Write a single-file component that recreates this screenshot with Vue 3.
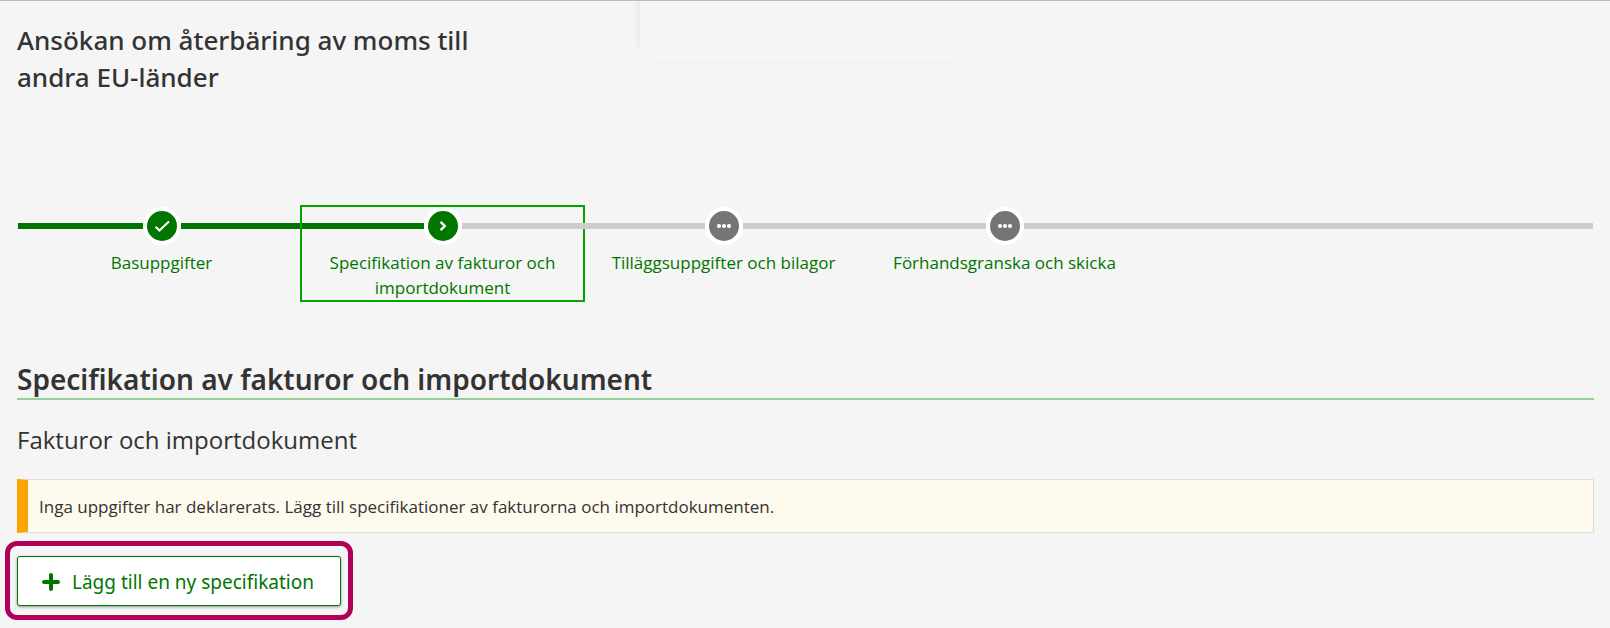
<template>
  <div class="page">
    <header class="page-header">
      <h1>Ansökan om återbäring av moms till andra EU-länder</h1>
      <div class="header-panel"></div>
    </header>

    <nav aria-label="Ansökans steg">
      <ol class="steps">
        <li
          v-for="step in steps"
          :key="step.label"
          class="step"
          :class="step.state"
          :aria-current="step.state === 'current' ? 'step' : null"
        >
          <div class="step-track">
            <span class="line line-before"></span>
            <span class="step-circle">
              <svg viewBox="0 0 30 30" width="30" height="30" aria-hidden="true">
                <path
                  v-if="step.state === 'done'"
                  class="stroke"
                  d="M8.6 15.8l3.8 3.7 9.6-9"
                />
                <path
                  v-else-if="step.state === 'current'"
                  class="stroke chevron"
                  d="M12.6 10.8l4.2 4.2-4.2 4.2"
                />
                <g v-else fill="#fff">
                  <circle cx="10" cy="15" r="2.1" />
                  <circle cx="15" cy="15" r="2.1" />
                  <circle cx="20" cy="15" r="2.1" />
                </g>
              </svg>
            </span>
            <span class="line line-after"></span>
          </div>
          <a href="#" class="step-label" @click.prevent>{{ step.label }}</a>
        </li>
      </ol>
    </nav>

    <main>
      <h2>Specifikation av fakturor och importdokument</h2>
      <h3>Fakturor och importdokument</h3>
      <p class="notice">
        Inga uppgifter har deklarerats. Lägg till specifikationer av fakturorna
        och importdokumenten.
      </p>
    </main>

    <div class="actions">
      <div class="highlight">
        <button type="button" class="add-btn">
          <svg viewBox="0 0 18 18" width="18" height="18" aria-hidden="true">
            <path d="M9 2v14M2 9h14" />
          </svg>
          <span>Lägg till en ny specifikation</span>
        </button>
      </div>
    </div>
  </div>
</template>

<script setup>
import { ref } from "vue";

const steps = ref([
  { label: "Basuppgifter", state: "done" },
  { label: "Specifikation av fakturor och importdokument", state: "current" },
  { label: "Tilläggsuppgifter och bilagor", state: "upcoming" },
  { label: "Förhandsgranska och skicka", state: "upcoming" },
]);
</script>

<style>
body {
  margin: 0;
  background: #f5f5f5;
}
</style>

<style scoped>
.page {
  border-top: 1px solid #bbb;
  color: #333;
  font-family: "Segoe UI", "Open Sans", "Noto Sans", sans-serif;
  font-size: 17px;
  line-height: 25px;
}

.page-header {
  display: flex;
  align-items: flex-start;
  padding-left: 17px;
}

h1,
h2 {
  font-family: "Segoe UI", "Noto Sans", "Open Sans", sans-serif;
}

h1 {
  box-sizing: border-box;
  width: 623px;
  margin: 0;
  padding: 21px 160px 0 0;
  font-size: 26px;
  font-weight: 500;
  line-height: 37px;
}

.header-panel {
  width: 322px;
  height: 61px;
  position: relative;
}

.header-panel::before {
  content: "";
  position: absolute;
  top: 0;
  left: -6px;
  width: 6px;
  height: 52px;
  background: linear-gradient(to right, transparent, #e9e9e9);
  mask-image: linear-gradient(#000 70%, transparent);
}

.header-panel::after {
  content: "";
  position: absolute;
  top: 100%;
  left: 8px;
  right: 0;
  height: 4px;
  background: linear-gradient(#f0f0f0, transparent);
  mask-image: linear-gradient(to right, transparent, #000 5% 95%, transparent);
}

.steps {
  display: flex;
  margin: 0;
  padding: 111px 17px 0 18px;
  list-style: none;
}

/* track running on past the first and last step */
.steps::before,
.steps::after {
  content: "";
  height: 6px;
  margin-top: 16px;
}

.steps::before {
  flex: none;
  width: 3px;
  background: #007600;
}

.steps::after {
  flex: 1;
  background: #cdcdcd;
}

.step {
  flex: 0 1 281px;
  text-align: center;
}

.step-track {
  display: flex;
  align-items: center;
}

.line {
  flex: 1;
  height: 6px;
  background: #cdcdcd;
}

.done .line,
.current .line-before {
  background: #007600;
}

.step-circle {
  display: flex;
  border: 4px solid #fff;
  border-radius: 50%;
  background: #757575;
}

.done .step-circle,
.current .step-circle {
  background: #007600;
}

.stroke {
  fill: none;
  stroke: #fff;
  stroke-width: 2;
}

.chevron {
  stroke-width: 2.4;
}

.current {
  outline: 2px solid #00a500;
}

.step-label {
  display: block;
  padding: 5px 24px 0;
  color: #007600;
  text-decoration: none;
}

main {
  padding: 61px 16px 0 17px;
}

h2 {
  margin: 0;
  border-bottom: 2px solid #99cf99;
  font-size: 28px;
  font-weight: 600;
  line-height: 37px;
}

h3 {
  margin: 23px 0 22px;
  font-size: 24px;
  font-weight: 500;
  line-height: 34px;
}

.notice {
  margin: 0;
  padding: 14px 11px 13px;
  border: 1px solid #ddd;
  border-left: 11px solid #faa500;
  background: #fffaee;
}

.actions {
  padding: 8px 5px;
}

.highlight {
  display: inline-block;
  padding: 10px 7px 9px;
  border: 5px solid #b0005a;
  border-radius: 12px;
}

.add-btn {
  display: flex;
  align-items: center;
  gap: 12px;
  padding: 12px 26px 10px 24px;
  border: 1px solid #007600;
  border-radius: 3px;
  background: #fff;
  box-shadow: 0 1px 3px rgba(0, 0, 0, 0.4);
  color: #007600;
  font-family: "Segoe UI", "Noto Sans", "Open Sans", sans-serif;
  font-size: 19px;
  line-height: 26px;
  cursor: pointer;
}

.add-btn path {
  stroke: #007600;
  stroke-width: 4;
  stroke-linecap: round;
}
</style>
